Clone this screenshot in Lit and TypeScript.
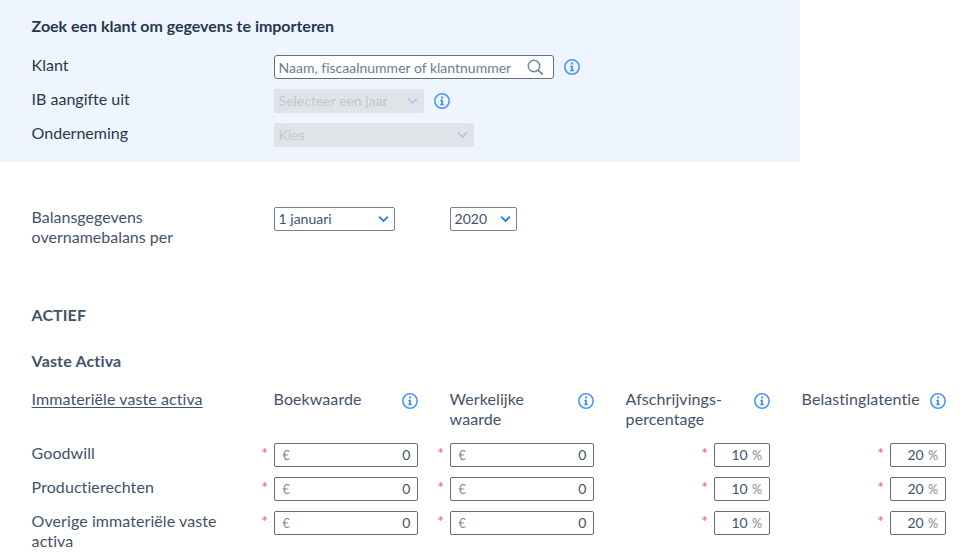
import { LitElement, html, css, svg, nothing } from "lit";
import { customElement, property } from "lit/decorators.js";

@customElement("info-icon")
class InfoIcon extends LitElement {
  static styles = css`
    :host { display: block; flex: none; width: 16px; height: 16px; }
    svg { display: block; }
  `;
  render() {
    return html`<svg width="16" height="16" viewBox="0 0 16 16">
      <circle cx="8" cy="8" r="7.2" fill="none" stroke="#4a97f5" stroke-width="1.6"/>
      <path d="M7 3.5h2.1v2.1H7zM6 6.7h3.1v4.2h1v1.4H6v-1.4h1V8H6z" fill="#4a97f5"/>
    </svg>`;
  }
}

@customElement("select-box")
class SelectBox extends LitElement {
  @property() value = "";
  @property({ type: Boolean, reflect: true }) disabled = false;
  static styles = css`
    :host {
      display: flex; align-items: center; justify-content: space-between;
      box-sizing: border-box; height: 24px; padding: 0 5px 0 3.6px;
      border: 1px solid #71819a; border-radius: 2px; background: #fff;
      font-size: 14px; line-height: 22px; color: #43536b;
    }
    :host([disabled]) { background: #e0e3e8; border-color: #e0e3e8; color: #c1c8d2; }
    svg { display: block; flex: none; fill: none; stroke: #1a73f0; stroke-width: 1.7; }
    :host([disabled]) svg { stroke: #a9c8ef; }
  `;
  render() {
    return html`<span>${this.value}</span>
      <svg width="11" height="8" viewBox="0 0 11 8">${svg`<path d="M1.2 1.7 5.5 6l4.3-4.3"/>`}</svg>`;
  }
}

@customElement("amount-field")
class AmountField extends LitElement {
  @property() value = "";
  @property() unit = "";
  static styles = css`
    :host { display: flex; justify-content: flex-end; height: 24px; letter-spacing: 0; }
    .star { color: #f4595b; font-size: 16px; line-height: 20px; margin-right: 6px; }
    .box {
      display: flex; align-items: baseline; justify-content: space-between;
      box-sizing: border-box; height: 24px; border: 1px solid #6b6b6f; border-radius: 2px;
      font-size: 14px; line-height: 22px; color: #43536b; background: #fff;
    }
    .money { width: 144px; padding: 0 6.5px 0 7.5px; }
    .percent { width: 56px; padding: 0 7px 0 16.5px; }
    .unit { font-size: 12.6px; color: #808b9d; }
  `;
  render() {
    const money = this.unit === "€";
    return html`<span class="star">*</span>
      <div class="box ${money ? "money" : "percent"}">
        ${money ? html`<span class="unit">€</span>` : nothing}
        <span>${this.value}</span>
        ${money ? nothing : html`<span class="unit">%</span>`}
      </div>`;
  }
}

@customElement("app-root")
class AppRoot extends LitElement {
  static styles = css`
    :host {
      display: block; height: 560px; overflow: hidden; background: #fff;
      font-family: Lato, sans-serif; font-size: 16px; line-height: 20px; color: #43536b;
      font-variant-ligatures: none;
    }
    .import {
      box-sizing: border-box; width: 800px; height: 162px; padding: 16px 0 0 31.6px;
      background: #eef5fe; color: #26394f;
    }
    .title { font-weight: 700; }
    .import .title { margin-bottom: 19px; letter-spacing: -0.02px; }
    .row { display: grid; grid-template-columns: 242.4px 1fr; height: 24px; margin-bottom: 10px; }
    .controls { display: flex; align-items: center; gap: 10px; }
    .search {
      display: flex; align-items: center; justify-content: space-between;
      box-sizing: border-box; width: 280px; height: 24px; padding: 0 9px 0 3.6px;
      border: 1px solid #5f6f88; border-radius: 3px; background: #fff;
      font-size: 14px; color: #6f7c90;
    }
    .search span { padding-top: 2px; }
    .search svg { display: block; }
    .year { width: 150px; }
    .company { width: 200px; }
    .balance { display: grid; grid-template-columns: 242.4px 176px 1fr; padding: 45px 0 0 31.6px; align-items: start; }
    .day { width: 121px; }
    .bookyear { width: 67px; }
    .section { padding: 58px 0 0 31.6px; letter-spacing: 0.08px; }
    .section .title { margin-bottom: 26px; }
    .section .sub { margin-bottom: 18px; letter-spacing: 0.16px; }
    .table { display: grid; grid-template-columns: 200.4px repeat(4, 176px); }
    .heads { height: 54px; }
    .head {
      display: flex; justify-content: space-between; align-items: flex-start;
      box-sizing: border-box; width: 186px; padding-left: 41.6px;
    }
    .head info-icon { margin-top: 4px; }
    .cell { box-sizing: border-box; width: 186px; }
    .lines { min-height: 34px; }
    .underline { text-decoration: underline; text-decoration-thickness: 1px; text-underline-offset: 2px; white-space: nowrap; }
  `;

  private heads = [["Boekwaarde"], ["Werkelijke", "waarde"], ["Afschrijvings-", "percentage"], ["Belastinglatentie"]];
  private lines = ["Goodwill", "Productierechten", "Overige immateriële vaste activa"];
  private fields = [["0", "€"], ["0", "€"], ["10", "%"], ["20", "%"]];

  render() {
    return html`
      <div class="import">
        <div class="title">Zoek een klant om gegevens te importeren</div>
        <div class="row"><span>Klant</span>
          <div class="controls">
            <div class="search"><span>Naam, fiscaalnummer of klantnummer</span>
              <svg width="17" height="17" viewBox="0 0 17 17" fill="none" stroke="#78869a" stroke-width="1.5">
                <circle cx="7" cy="7" r="5.7"/><path d="m11.1 11.1 4.6 4.4" stroke-width="1.9"/>
              </svg>
            </div>
            <info-icon></info-icon>
          </div>
        </div>
        <div class="row"><span>IB aangifte uit</span>
          <div class="controls"><select-box class="year" disabled value="Selecteer een jaar"></select-box><info-icon></info-icon></div>
        </div>
        <div class="row"><span>Onderneming</span>
          <div class="controls"><select-box class="company" disabled value="Kies"></select-box></div>
        </div>
      </div>
      <div class="balance">
        <span>Balansgegevens<br>overnamebalans per</span>
        <select-box class="day" value="1 januari"></select-box>
        <select-box class="bookyear" value="2020"></select-box>
      </div>
      <div class="section">
        <div class="title">ACTIEF</div>
        <div class="title sub">Vaste Activa</div>
        <div class="table heads">
          <span class="underline">Immateriële vaste activa</span>
          ${this.heads.map(h => html`<div class="head"><span>${h[0]}${h[1] ? html`<br>${h[1]}` : nothing}</span><info-icon></info-icon></div>`)}
        </div>
        ${this.lines.map(l => html`<div class="table lines"><span>${l}</span>
          ${this.fields.map(([v, u]) => html`<amount-field class="cell" value=${v} unit=${u}></amount-field>`)}
        </div>`)}
      </div>`;
  }
}
